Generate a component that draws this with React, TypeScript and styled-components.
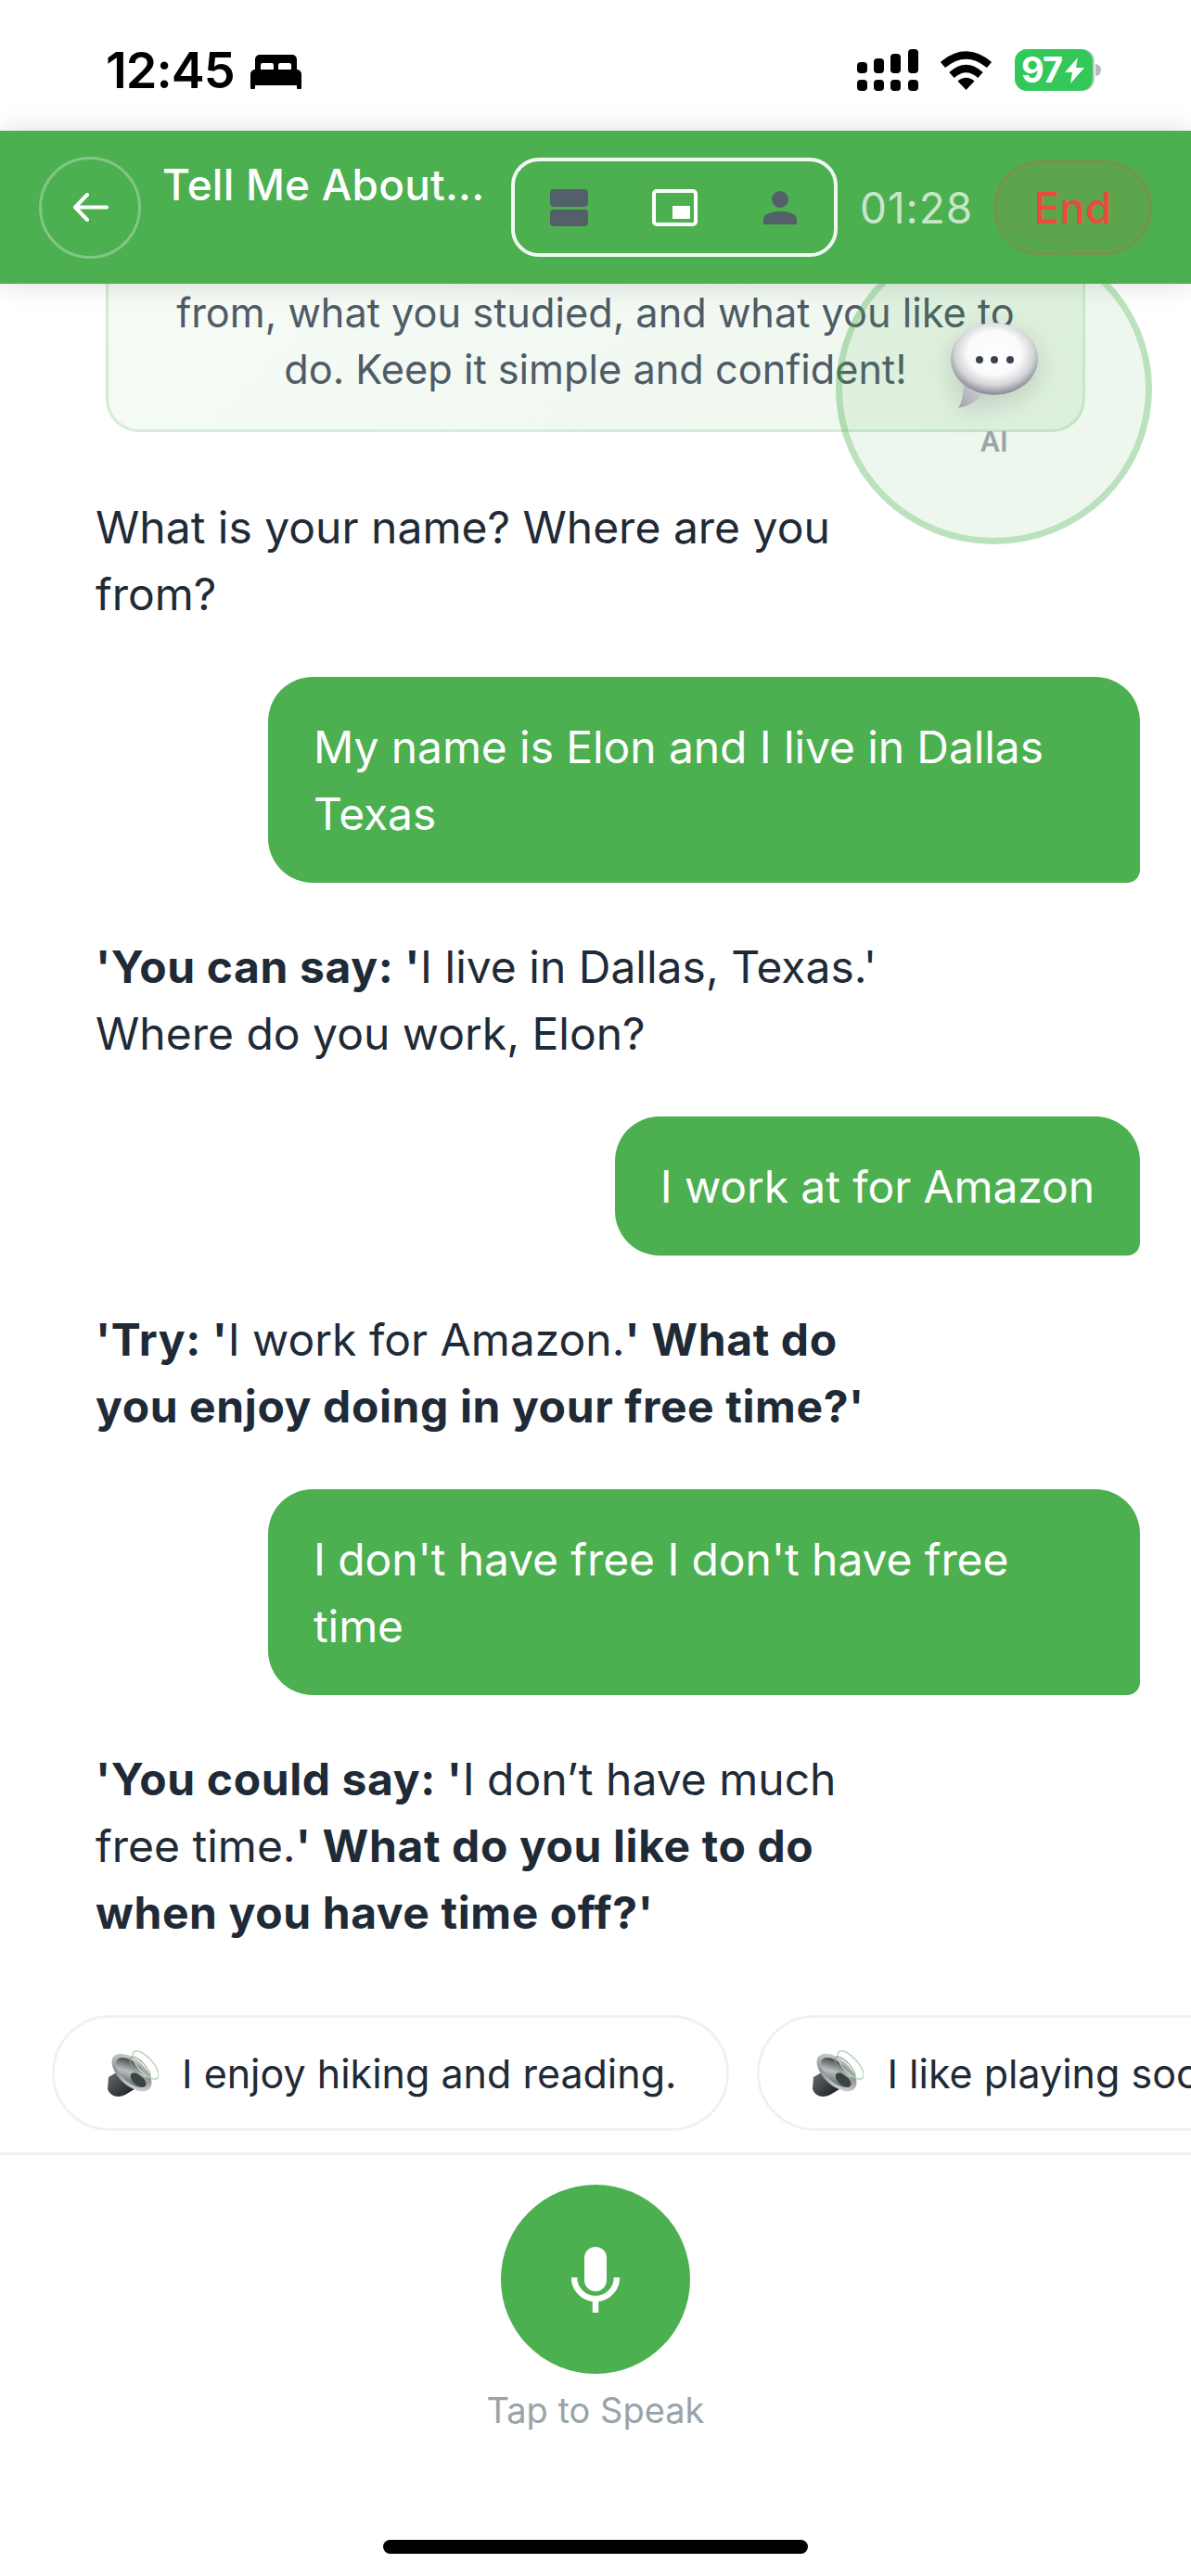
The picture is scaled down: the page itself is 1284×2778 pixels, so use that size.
import React from "react";
import styled, { createGlobalStyle } from "styled-components";

const GlobalStyle = createGlobalStyle`
  html, body {
    margin: 0;
    padding: 0;
    background: #fff;
  }
  * {
    box-sizing: border-box;
  }
`;

const GREEN = "#4caf50";
const SLATE = "#546069";

const Screen = styled.div`
  position: relative;
  width: 1284px;
  height: 2778px;
  display: flex;
  flex-direction: column;
  overflow: hidden;
  background: #fff;
  font-family: Inter, "Noto Sans", sans-serif;
  color: #1f2a37;
`;

const StatusBar = styled.div`
  height: 141px;
  flex: none;
  display: flex;
  justify-content: space-between;
  padding: 53px 97px 0 114px;
`;

const StatusGroup = styled.div`
  display: flex;
  align-items: flex-start;
`;

const Clock = styled.span`
  font-size: 54px;
  line-height: 46px;
  font-weight: 600;
  letter-spacing: -1px;
  color: #000;
  margin-right: 17px;
`;

const Battery = styled.div`
  width: 84px;
  height: 45px;
  margin-left: 24px;
  border-radius: 13px;
  background: #34c759;
  color: #fff;
  font-size: 38px;
  line-height: 45px;
  font-weight: 700;
  letter-spacing: -1px;
  display: flex;
  align-items: center;
  padding-left: 7px;
  gap: 3px;
  box-shadow: 2px 0 0 #c4cacd;
`;

const BatteryNub = styled.div`
  width: 6px;
  height: 13px;
  margin: 16px 0 0 3px;
  border-radius: 0 6px 6px 0;
  background: #b5bcc0;
`;

const Header = styled.header`
  position: relative;
  z-index: 2;
  height: 165px;
  flex: none;
  display: flex;
  align-items: center;
  padding-left: 42px;
  background: ${GREEN};
  box-shadow: 0 0 28px rgba(0, 0, 0, 0.14);
`;

const BackButton = styled.div`
  width: 110px;
  height: 110px;
  flex: none;
  border-radius: 50%;
  border: 3px solid rgba(255, 255, 255, 0.3);
  display: flex;
  align-items: center;
  justify-content: center;
`;

const Title = styled.div`
  width: 399px;
  flex: none;
  align-self: flex-start;
  padding: 30px 0 0 23px;
  color: #fff;
  font-size: 46px;
  line-height: 56px;
  font-weight: 550;
  letter-spacing: 0.2px;
  white-space: nowrap;
`;

const LayoutToggle = styled.div`
  width: 352px;
  height: 107px;
  flex: none;
  border: 4px solid rgba(255, 255, 255, 0.92);
  border-radius: 30px;
  display: flex;
  align-items: center;
  padding-left: 1px;
`;

const ToggleSlot = styled.div`
  width: 114px;
  display: flex;
  justify-content: center;
`;

const Timer = styled.div`
  margin-left: 24px;
  width: 120px;
  flex: none;
  color: rgba(255, 255, 255, 0.7);
  font-size: 46px;
  letter-spacing: 0.9px;
  white-space: nowrap;
`;

const EndButton = styled.div`
  width: 171px;
  height: 102px;
  flex: none;
  margin-left: 24px;
  border-radius: 51px;
  background: rgba(231, 76, 60, 0.1);
  border: 3px solid rgba(231, 76, 60, 0.2);
  color: #e74c3c;
  font-size: 46px;
  font-weight: 500;
  display: flex;
  align-items: center;
  justify-content: center;
`;

const Conversation = styled.main`
  flex: 1;
  min-height: 0;
  overflow: hidden;
  display: flex;
  flex-direction: column;
  gap: 54px;
  padding: 0 55px 0 0;
`;

const HintCard = styled.div`
  width: 1056px;
  flex: none;
  margin: -42px 0 12px 114px;
  padding: 40px 40px 34px;
  border: 3px solid rgba(76, 175, 80, 0.18);
  border-radius: 36px;
  background: linear-gradient(135deg, #f6fbf6, #eef7ee);
  color: #4f5b66;
  font-size: 43.3px;
  line-height: 61px;
  text-align: center;
`;

const AiMessage = styled.div`
  max-width: 963px;
  padding: 1px 0 0 103px;
  margin-bottom: -1px;
  font-size: 48px;
  line-height: 72px;
  b {
    font-weight: 700;
    letter-spacing: 0.6px;
  }
`;

const UserMessage = styled.div`
  align-self: flex-end;
  max-width: 940px;
  padding: 40px 49px 38px;
  border-radius: 48px 48px 14px 48px;
  background: ${GREEN};
  color: #fff;
  font-size: 48px;
  line-height: 72px;
  letter-spacing: -0.1px;
`;

const SuggestionRow = styled.div`
  flex: none;
  display: flex;
  gap: 30px;
  padding: 0 0 23px 56px;
  border-bottom: 3px solid #f1f1f1;
  overflow: hidden;
`;

const Chip = styled.div`
  height: 125px;
  flex: none;
  display: flex;
  align-items: center;
  gap: 25px;
  padding: 0 54px 0 56px;
  border: 3px solid #f1f1f1;
  border-radius: 63px;
  font-size: 43px;
  white-space: nowrap;
`;

const Footer = styled.footer`
  flex: none;
  height: 454px;
  display: flex;
  flex-direction: column;
  align-items: center;
  padding-top: 32px;
`;

const MicButton = styled.div`
  width: 204px;
  height: 204px;
  border-radius: 50%;
  background: ${GREEN};
  display: flex;
  align-items: center;
  justify-content: center;
`;

const SpeakLabel = styled.div`
  margin-top: 16px;
  color: #99a3a8;
  font-size: 38px;
  line-height: 46px;
`;

const HomeBar = styled.div`
  width: 458px;
  height: 15px;
  margin-top: auto;
  margin-bottom: 24px;
  border-radius: 8px;
  background: #000;
`;

const AiBubble = styled.div`
  position: absolute;
  z-index: 3;
  left: 901px;
  top: 252px;
  width: 341px;
  height: 335px;
  border-radius: 50%;
  border: 7px solid rgba(76, 175, 80, 0.3);
  background: rgba(76, 175, 80, 0.1);
  display: flex;
  flex-direction: column;
  align-items: center;
  justify-content: center;
`;

const AiLabel = styled.div`
  margin-top: 20px;
  color: #9aa5a9;
  font-size: 30px;
  line-height: 30px;
  font-weight: 600;
`;

const BackArrowIcon = () => (
  <svg width="39" height="31" viewBox="0 0 39 31">
    <path
      d="M37 15.5H3M16 2L3 15.5 16 29"
      fill="none"
      stroke="#fff"
      strokeWidth="4"
      strokeLinecap="round"
      strokeLinejoin="round"
    />
  </svg>
);

const BedIcon = () => (
  <svg width="55" height="37" viewBox="0 0 55 37" style={{ marginTop: 6 }}>
    <path
      fillRule="evenodd"
      d="M10 0h35a5 5 0 0 1 5 5v12H5V5a5 5 0 0 1 5-5zM13 9a2 2 0 0 0-2 2v5h14v-5a2 2 0 0 0-2-2zM32 9a2 2 0 0 0-2 2v5h14v-5a2 2 0 0 0-2-2z"
    />
    <path d="M5 16h45a5 5 0 0 1 5 5v15a1 1 0 0 1-1 1h-3a1 1 0 0 1-1-1v-3H5v3a1 1 0 0 1-1 1H1a1 1 0 0 1-1-1V21a5 5 0 0 1 5-5z" />
  </svg>
);

const SignalIcon = () => (
  <svg width="66" height="45" viewBox="0 0 66 45">
    <rect x="0" y="14" width="11" height="12" rx="4" />
    <rect x="18" y="10" width="11" height="16" rx="4" />
    <rect x="36" y="5" width="11" height="21" rx="4" />
    <rect x="55" y="0" width="11" height="26" rx="4" />
    <rect x="0" y="33" width="11" height="12" rx="4" />
    <rect x="18" y="33" width="11" height="12" rx="4" />
    <rect x="36" y="33" width="11" height="12" rx="4" />
    <rect x="55" y="33" width="11" height="12" rx="4" />
  </svg>
);

const WifiIcon = () => (
  <svg width="57" height="43" viewBox="0 0 57 43" style={{ marginLeft: 23, marginTop: 1 }}>
    <path d="M3.5 16Q28.5-5 53.5 16" fill="none" stroke="#000" strokeWidth="8" />
    <path d="M13 27Q28.5 13 44 27" fill="none" stroke="#000" strokeWidth="8" />
    <path d="M28.5 43L19.5 33.5Q28.5 26 37.5 33.5Z" />
  </svg>
);

const BoltIcon = () => (
  <svg width="21" height="28" viewBox="0 0 21 28">
    <path d="M14 0L0 16h8L6 28 21 11h-9z" fill="#fff" />
  </svg>
);

const SplitIcon = () => (
  <svg width="41" height="40" viewBox="0 0 41 40">
    <rect width="41" height="19" rx="4" fill={SLATE} />
    <rect y="22" width="41" height="18" rx="4" fill={SLATE} />
  </svg>
);

const PipIcon = () => (
  <svg width="49" height="40" viewBox="0 0 49 40">
    <rect x="2" y="2" width="45" height="36" rx="3" fill="none" stroke="#fff" strokeWidth="4" />
    <rect x="22" y="18" width="19" height="14" fill="#fff" />
  </svg>
);

const PersonIcon = () => (
  <svg width="36" height="36" viewBox="0 0 36 36">
    <circle cx="18" cy="9" r="9" fill={SLATE} />
    <path d="M0 36v-6c0-5 9-8 18-8s18 3 18 8v6z" fill={SLATE} />
  </svg>
);

const ChatBubbleIcon = () => (
  <svg width="94" height="93" viewBox="0 0 94 93" style={{ filter: "drop-shadow(0 8px 14px rgba(0,0,0,0.14))" }}>
    <defs>
      <radialGradient id="bubbleFace" cx="50%" cy="42%" r="56%">
        <stop offset="0%" stopColor="#fff" />
        <stop offset="55%" stopColor="#fafafa" />
        <stop offset="80%" stopColor="#d4d5d9" />
        <stop offset="100%" stopColor="#8f919b" />
      </radialGradient>
      <linearGradient id="bubbleTail" x1="0" y1="1" x2="1" y2="0">
        <stop offset="0%" stopColor="#a0a3ab" />
        <stop offset="100%" stopColor="#d8dadd" />
      </linearGradient>
    </defs>
    <path d="M14 62C14 76 12 86 8 92 20 90 30 84 36 74z" fill="url(#bubbleTail)" />
    <ellipse cx="47" cy="39" rx="47" ry="39" fill="url(#bubbleFace)" />
    <circle cx="31" cy="40" r="4" fill="#39434e" />
    <circle cx="47" cy="40" r="4" fill="#39434e" />
    <circle cx="64" cy="40" r="4" fill="#39434e" />
  </svg>
);

const SpeakerIcon = () => (
  <svg width="56" height="53" viewBox="0 0 56 53">
    <defs>
      <linearGradient id="speakerRim" x1="0" y1="0" x2="1" y2="1">
        <stop offset="0%" stopColor="#d9dcdd" />
        <stop offset="55%" stopColor="#8e9496" />
        <stop offset="100%" stopColor="#eceeee" />
      </linearGradient>
      <linearGradient id="speakerBack" x1="0" y1="0" x2="1" y2="1">
        <stop offset="0%" stopColor="#6a7276" />
        <stop offset="100%" stopColor="#14181b" />
      </linearGradient>
      <linearGradient id="speakerCone" x1="0" y1="0" x2="1" y2="1">
        <stop offset="0%" stopColor="#15181b" />
        <stop offset="50%" stopColor="#b9bec0" />
        <stop offset="100%" stopColor="#3f464a" />
      </linearGradient>
    </defs>
    <path d="M2 31L14 24 30 44 20 50C12 54 4 52 1 44z" fill="url(#speakerBack)" />
    <ellipse cx="27" cy="26" rx="26" ry="14" transform="rotate(42 27 26)" fill="url(#speakerRim)" />
    <ellipse cx="27" cy="26" rx="21" ry="10.5" transform="rotate(42 27 26)" fill="url(#speakerCone)" />
    <ellipse cx="34" cy="34" rx="10" ry="5.5" transform="rotate(42 34 34)" fill="#3c4347" />
    <ellipse cx="42" cy="18" rx="19" ry="8" transform="rotate(48 42 18)" fill="none" stroke="#b8d8b8" strokeWidth="1.5" />
    <ellipse cx="36" cy="21" rx="15" ry="6" transform="rotate(48 36 21)" fill="none" stroke="#8a9a8e" strokeWidth="1" />
  </svg>
);

const MicIcon = () => (
  <svg width="52" height="71" viewBox="0 0 52 71">
    <rect x="14" y="0" width="24" height="48" rx="12" fill="#fff" />
    <path d="M3 33a23 23 0 0 0 46 0M26 56v15" fill="none" stroke="#fff" strokeWidth="6.5" />
  </svg>
);

export default function App() {
  return (
    <Screen>
      <GlobalStyle />
      <StatusBar>
        <StatusGroup>
          <Clock>12:45</Clock>
          <BedIcon />
        </StatusGroup>
        <StatusGroup>
          <SignalIcon />
          <WifiIcon />
          <Battery>
            97
            <BoltIcon />
          </Battery>
          <BatteryNub />
        </StatusGroup>
      </StatusBar>

      <Header>
        <BackButton>
          <BackArrowIcon />
        </BackButton>
        <Title>Tell Me About...</Title>
        <LayoutToggle>
          <ToggleSlot>
            <SplitIcon />
          </ToggleSlot>
          <ToggleSlot>
            <PipIcon />
          </ToggleSlot>
          <ToggleSlot>
            <PersonIcon />
          </ToggleSlot>
        </LayoutToggle>
        <Timer>01:28</Timer>
        <EndButton>End</EndButton>
      </Header>

      <Conversation>
        <HintCard>
          from, what you studied, and what you like to do. Keep it simple and confident!
        </HintCard>
        <AiMessage>What is your name? Where are you from?</AiMessage>
        <UserMessage>My name is Elon and I live in Dallas Texas</UserMessage>
        <AiMessage>
          <b>'You can say: '</b>I live in Dallas, Texas.' Where do you work, Elon?
        </AiMessage>
        <UserMessage>I work at for Amazon</UserMessage>
        <AiMessage>
          <b>'Try: '</b>I work for Amazon.<b>' What do you enjoy doing in your free time?'</b>
        </AiMessage>
        <UserMessage>I don't have free I don't have free time</UserMessage>
        <AiMessage>
          <b>'You could say: '</b>I don’t have much free time.<b>' What do you like to do when you have time off?'</b>
        </AiMessage>
      </Conversation>

      <SuggestionRow>
        <Chip>
          <SpeakerIcon />
          I enjoy hiking and reading.
        </Chip>
        <Chip>
          <SpeakerIcon />
          I like playing soccer on weekends.
        </Chip>
      </SuggestionRow>

      <Footer>
        <MicButton>
          <MicIcon />
        </MicButton>
        <SpeakLabel>Tap to Speak</SpeakLabel>
        <HomeBar />
      </Footer>

      <AiBubble>
        <ChatBubbleIcon />
        <AiLabel>AI</AiLabel>
      </AiBubble>
    </Screen>
  );
}
